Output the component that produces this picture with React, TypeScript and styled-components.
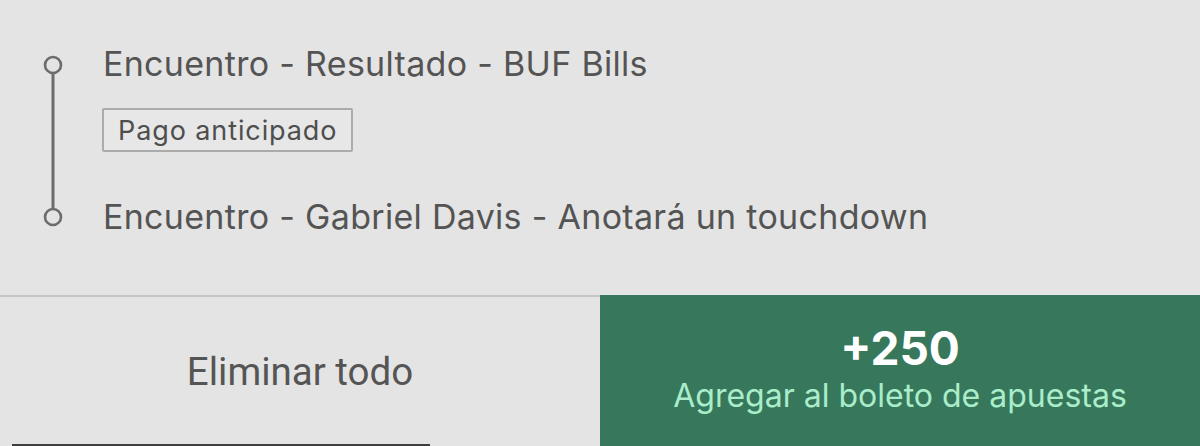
import React from "react";
import styled, { createGlobalStyle } from "styled-components";

const Global = createGlobalStyle`
  html, body { margin: 0; padding: 0; background: #e4e4e4; }
  body { width: 1200px; height: 446px; overflow: hidden; }
`;

const Sheet = styled.div`
  width: 1200px;
  height: 446px;
  display: flex;
  flex-direction: column;
  background: #e4e4e4;
  font-family: Inter, "Liberation Sans", sans-serif;
  color: #545454;
  overflow: hidden;
`;

const Legs = styled.section`
  display: flex;
  padding: 44px 0 0 43px;
  height: 295px;
  box-sizing: border-box;
`;

const Rail = styled.svg`
  flex: none;
  width: 20px;
  height: 194px;
  margin-right: 40px;
`;

const LegColumn = styled.div`
  display: flex;
  flex-direction: column;
  align-items: flex-start;
`;

const LegTitle = styled.div<{ $gapTop?: number }>`
  font-size: 34px;
  line-height: 40px;
  height: 40px;
  letter-spacing: 0.3px;
  margin-top: ${(p) => p.$gapTop ?? 0}px;
  white-space: nowrap;
`;

const Tag = styled.span`
  margin-left: -1px;
  margin-top: 24px;
  height: 44px;
  box-sizing: border-box;
  display: inline-flex;
  align-items: center;
  padding: 0 14px 0 14px;
  border: 2px solid #ababab;
  border-radius: 2px;
  background: #e7e7e7;
  font-size: 27px;
  letter-spacing: 0.9px;
  color: #4e4e4e;
`;

const Actions = styled.div`
  flex: 1;
  display: flex;
`;

const ClearButton = styled.button`
  flex: 0 0 600px;
  position: relative;
  border: 0;
  border-top: 2px solid #c5c5c5;
  background: #e4e4e4;
  font-family: Roboto, "Liberation Sans", sans-serif;
  font-size: 38.5px;
  color: #555;
  padding: 0;
  display: flex;
  align-items: center;
  justify-content: center;
  &::after {
    content: "";
    position: absolute;
    left: 12px;
    width: 418px;
    bottom: 0;
    height: 2px;
    background: #3e3e3e;
  }
`;

const AddButton = styled.button`
  flex: 1;
  border: 0;
  background: #37775c;
  padding: 0;
  display: flex;
  flex-direction: column;
  align-items: center;
  justify-content: center;
  font-family: Inter, "Liberation Sans", sans-serif;
`;

const Odds = styled.span`
  color: #ffffff;
  font-weight: 700;
  font-size: 46px;
  line-height: 50px;
`;

const AddLabel = styled.span`
  color: #a9edca;
  font-size: 32px;
  line-height: 46px;
`;

export default function App() {
  return (
    <Sheet>
      <Global />
      <Legs>
        <Rail viewBox="0 0 20 194">
          <circle cx="10" cy="21" r="8" fill="none" stroke="#6c6c6c" strokeWidth="2.6" />
          <line x1="10" y1="29" x2="10" y2="165" stroke="#6c6c6c" strokeWidth="3" />
          <circle cx="10" cy="173" r="8" fill="none" stroke="#6c6c6c" strokeWidth="2.6" />
        </Rail>
        <LegColumn>
          <LegTitle>Encuentro - Resultado - BUF Bills</LegTitle>
          <Tag>Pago anticipado</Tag>
          <LegTitle $gapTop={45}>Encuentro - Gabriel Davis - Anotará un touchdown</LegTitle>
        </LegColumn>
      </Legs>
      <Actions>
        <ClearButton type="button">Eliminar todo</ClearButton>
        <AddButton type="button">
          <Odds>+250</Odds>
          <AddLabel>Agregar al boleto de apuestas</AddLabel>
        </AddButton>
      </Actions>
    </Sheet>
  );
}
